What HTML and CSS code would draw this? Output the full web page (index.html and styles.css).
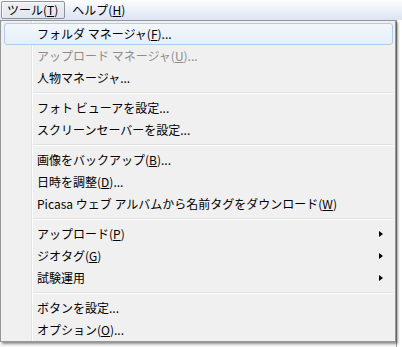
FILE: index.html
```html
<!DOCTYPE html>
<html lang="ja">
<head>
<meta charset="utf-8">
<link rel="stylesheet" href="styles.css">
</head>
<body>
<div class="menubar">
  <span class="mb-item active">ツール(<u>T</u>)</span>
  <span class="mb-item">ヘルプ(<u>H</u>)</span>
</div>
<div class="stage">
  <div class="menu">
    <div class="item hover">フォルダ マネージャ(<u>F</u>)...</div>
    <div class="item disabled">アップロード マネージャ(<u>U</u>)...</div>
    <div class="item">人物マネージャ...</div>
    <div class="sep"></div>
    <div class="item">フォト ビューアを設定...</div>
    <div class="item">スクリーンセーバーを設定...</div>
    <div class="sep"></div>
    <div class="item">画像をバックアップ(<u>B</u>)...</div>
    <div class="item">日時を調整(<u>D</u>)...</div>
    <div class="item">Picasa ウェブ アルバムから名前タグをダウンロード(<u>W</u>)</div>
    <div class="sep"></div>
    <div class="item sub">アップロード(<u>P</u>)</div>
    <div class="item sub">ジオタグ(<u>G</u>)</div>
    <div class="item sub">試験運用</div>
    <div class="sep"></div>
    <div class="item">ボタンを設定...</div>
    <div class="item">オプション(<u>O</u>)...</div>
  </div>
</div>
</body>
</html>
```
FILE: styles.css
```css
html, body {
  margin: 0;
  padding: 0;
}
body {
  width: 402px;
  height: 347px;
  overflow: hidden;
  background: #f4f4f4;
  font-family: "Noto Sans CJK JP", "Noto Sans", sans-serif;
  font-size: 12px;
  color: #000;
}
u {
  text-decoration: underline;
  text-underline-offset: 1px;
}
.menubar {
  height: 20px;
  display: flex;
  align-items: stretch;
  background: linear-gradient(#fcfdfe, #dbe3f3);
}
.mb-item {
  display: flex;
  align-items: center;
  padding: 0 6px;
  line-height: 18px;
  margin-top: 1px;
  margin-bottom: 1px;
  border: 1px solid transparent;
  border-radius: 2px;
}
.mb-item.active {
  margin-left: 1px;
  padding: 0 6px 0 5px;
  border-color: #8f9399;
  background: linear-gradient(#edf0f5, #e1e6ee);
  box-shadow: inset 1px 1px 0 rgba(255,255,255,0.7);
}
.stage {
  position: relative;
  height: 327px;
  background: linear-gradient(to right, transparent 396px, #a0a0a0 396px, #a0a0a0 397px, #fff 397px);
}
.menu {
  width: 390px;
  background-color: #f0f0f0;
  background-image: linear-gradient(to right, transparent 30px, #e2e3e3 30px, #e2e3e3 31px, #fff 31px, #fff 32px, transparent 32px);
  border: 1px solid #979797;
  padding: 2px 2px 0 2px;
  box-shadow: 2px 2px 2px rgba(0,0,0,0.4);
}
.item {
  position: relative;
  height: 22px;
  display: flex;
  align-items: center;
  padding-left: 32px;
  padding-bottom: 1px;
  margin-left: 1px;
  border: 1px solid transparent;
  box-sizing: border-box;
  border-radius: 3px;
  white-space: nowrap;
}
.item.hover {
  border-color: #aecdef;
  background: linear-gradient(#f3f7fc, #e6eef8);
}
.item.disabled {
  color: #8d8d8d;
}
.item.sub::after {
  content: "";
  position: absolute;
  right: 9px;
  top: 7px;
  border-left: 4px solid #000;
  border-top: 3.5px solid transparent;
  border-bottom: 3.5px solid transparent;
}
.sep {
  height: 8px;
  margin-left: 30px;
  background: linear-gradient(transparent 3px, #e0e0e0 3px, #e0e0e0 4px, #fff 4px, #fff 5px, transparent 5px);
}
```
